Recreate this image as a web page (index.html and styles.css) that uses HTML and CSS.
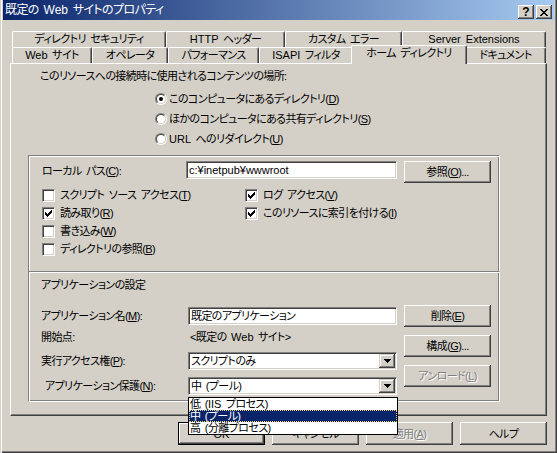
FILE: index.html
```html
<!DOCTYPE html>
<html lang="ja">
<head>
<meta charset="utf-8">
<title>既定の Web サイトのプロパティ</title>
<link rel="stylesheet" href="styles.css">
</head>
<body>
<div class="window">
  <div class="titlebar">
    <span class="title">既定の <span class="en">Web</span> サイトのプロパティ</span>
    <div class="tbtns">
      <span class="tbtn help">?</span>
      <span class="tbtn close"><svg width="8" height="7" viewBox="0 0 8 7" shape-rendering="crispEdges"><path d="M0 0h2v1H0zM6 0h2v1H6zM1 1h2v1H1zM5 1h2v1H5zM2 2h4v1H2zM3 3h2v1H3zM2 4h4v1H2zM1 5h2v1H1zM5 5h2v1H5zM0 6h2v1H0zM6 6h2v1H6z" fill="#000"/></svg></span>
    </div>
  </div>
  <div class="dlg">
    <div class="tabs">
      <div class="tabrow">
        <div class="tab t-dirsec">ディレクトリ セキュリティ</div>
        <div class="tab t-http"><span class="en">HTTP</span> ヘッダー</div>
        <div class="tab t-err">カスタム エラー</div>
        <div class="tab t-ext"><span class="en">Server Extensions</span></div>
      </div>
      <div class="tabrow">
        <div class="tab t-web"><span class="en">Web</span> サイト</div>
        <div class="tab t-op">オペレータ</div>
        <div class="tab t-perf">パフォーマンス</div>
        <div class="tab t-isapi"><span class="en">ISAPI</span> フィルタ</div>
        <div class="tab t-home selected">ホーム ディレクトリ</div>
        <div class="tab t-doc">ドキュメント</div>
      </div>
    </div>
    <div class="panel">
      <p class="intro">このリソースへの接続時に使用されるコンテンツの場所:</p>
      <div class="radios">
        <div class="radio"><span class="rb on"></span><span>このコンピュータにあるディレクトリ(<u>D</u>)</span></div>
        <div class="radio"><span class="rb"></span><span>ほかのコンピュータにある共有ディレクトリ(<u>S</u>)</span></div>
        <div class="radio"><span class="rb"></span><span><span class="en">URL</span> へのリダイレクト(<u>U</u>)</span></div>
      </div>
      <div class="group g1">
        <div class="pathrow">
          <span class="lbl">ローカル パス(<u>C</u>):</span>
          <div class="field path"><span class="en">c:¥inetpub¥wwwroot</span></div>
          <div class="btn">参照(<u>O</u>)...</div>
        </div>
        <div class="checks">
          <div class="ccol left">
            <div class="chk"><span class="cb"></span><span>スクリプト ソース アクセス(<u>T</u>)</span></div>
            <div class="chk"><span class="cb on"><svg width="7" height="7" viewBox="0 0 7 7" shape-rendering="crispEdges"><path d="M0 2h1v3H0zM1 3h1v3H1zM2 4h1v3H2zM3 3h1v3H3zM4 2h1v3H4zM5 1h1v3H5zM6 0h1v3H6z"/></svg></span><span>読み取り(<u>R</u>)</span></div>
            <div class="chk"><span class="cb"></span><span>書き込み(<u>W</u>)</span></div>
            <div class="chk"><span class="cb"></span><span>ディレクトリの参照(<u>B</u>)</span></div>
          </div>
          <div class="ccol right">
            <div class="chk"><span class="cb on"><svg width="7" height="7" viewBox="0 0 7 7" shape-rendering="crispEdges"><path d="M0 2h1v3H0zM1 3h1v3H1zM2 4h1v3H2zM3 3h1v3H3zM4 2h1v3H4zM5 1h1v3H5zM6 0h1v3H6z"/></svg></span><span>ログ アクセス(<u>V</u>)</span></div>
            <div class="chk"><span class="cb on"><svg width="7" height="7" viewBox="0 0 7 7" shape-rendering="crispEdges"><path d="M0 2h1v3H0zM1 3h1v3H1zM2 4h1v3H2zM3 3h1v3H3zM4 2h1v3H4zM5 1h1v3H5zM6 0h1v3H6z"/></svg></span><span>このリソースに索引を付ける(<u>I</u>)</span></div>
          </div>
        </div>
      </div>
      <div class="group g2">
        <div class="heading">アプリケーションの設定</div>
        <div class="appgrid">
          <div class="appfields">
            <div class="arow r-name"><span class="lbl">アプリケーション名(<u>M</u>):</span><div class="field app">既定のアプリケーション</div></div>
            <div class="arow r-start"><span class="lbl">開始点:</span><span class="val">&lt;既定の <span class="en">Web</span> サイト&gt;</span></div>
            <div class="arow r-exec"><span class="lbl">実行アクセス権(<u>P</u>):</span><div class="select"><span class="sval">スクリプトのみ</span><span class="sarrow"><svg width="7" height="4" viewBox="0 0 7 4" shape-rendering="crispEdges"><path d="M0 0h7v1H0zM1 1h5v1H1zM2 2h3v1H2zM3 3h1v1H3z"/></svg></span></div></div>
            <div class="arow r-prot"><span class="lbl ind">アプリケーション保護(<u>N</u>):</span>
              <div class="select open"><span class="sval">中 (プール)</span><span class="sarrow"><svg width="7" height="4" viewBox="0 0 7 4" shape-rendering="crispEdges"><path d="M0 0h7v1H0zM1 1h5v1H1zM2 2h3v1H2zM3 3h1v1H3z"/></svg></span>
                <ul class="dropdown">
                  <li>低 (<span class="en">IIS</span> プロセス)</li>
                  <li class="hl">中 (プール)</li>
                  <li>高 (分離プロセス)</li>
                </ul>
              </div>
            </div>
          </div>
          <div class="appbtns">
            <div class="btn">削除(<u>E</u>)</div>
            <div class="btn">構成(<u>G</u>)...</div>
            <div class="btn disabled">アンロード(<u>L</u>)</div>
          </div>
        </div>
      </div>
    </div>
    <div class="footer">
      <div class="btn fbtn default"><span class="en">OK</span></div>
      <div class="btn fbtn">キャンセル</div>
      <div class="btn fbtn disabled">適用(<u>A</u>)</div>
      <div class="btn fbtn">ヘルプ</div>
    </div>
  </div>
</div>
</body>
</html>
```

FILE: styles.css
```css
* { box-sizing: border-box; }
html, body { margin: 0; padding: 0; }
body {
  font-family: "Liberation Sans", "Noto Sans CJK JP", sans-serif;
  font-size: 11px;
  line-height: 14px;
  letter-spacing: -0.6px;
  word-spacing: 2px;
  font-feature-settings: "palt";
  color: #000;
  background: #d4d0c8;
}
.en { letter-spacing: 0; }
u { text-decoration: underline; text-underline-offset: 1px; }

.window {
  position: relative;
  width: 557px;
  height: 453px;
  padding: 0 3px 3px;
  background: #d4d0c8;
  box-shadow: inset 1px 0 0 #d4d0c8, inset 2px 0 0 #fff, inset -1px -1px 0 #404040, inset -2px -2px 0 #808080;
}

.titlebar {
  display: flex;
  align-items: center;
  justify-content: space-between;
  height: 20px;
  padding-left: 2px;
  background: linear-gradient(to right, #0a246a, #a6caf0);
  color: #fff;
  white-space: nowrap;
}
.title { font-size: 12px; }
.tbtns { display: flex; gap: 2px; margin-right: 2px; align-self: flex-end; margin-bottom: 1px; }
.tbtn {
  width: 16px;
  height: 14px;
  display: flex;
  align-items: center;
  justify-content: center;
  background: #d4d0c8;
  color: #000;
  font-weight: bold;
  font-size: 12px;
  letter-spacing: 0;
  box-shadow: inset -1px -1px 0 #404040, inset 1px 1px 0 #fff, inset -2px -2px 0 #808080;
}

.dlg { padding: 11px 7px 0; }

.tabs { margin-left: 2px; }
.tabrow { display: flex; height: 16px; }
.tab {
  height: 16px;
  flex: none;
  border-top: 1px solid #fff;
  border-left: 1px solid #fff;
  border-right: 1px solid #404040;
  border-radius: 2px 2px 0 0;
  box-shadow: inset -1px 0 0 #808080;
  background: #d4d0c8;
  text-align: center;
  white-space: nowrap;
  line-height: 15px;
}
.t-dirsec { width: 154px; }
.t-http { width: 119px; }
.t-err { width: 117px; }
.t-ext { width: 144px; }
.t-web { width: 80px; }
.t-op { width: 76px; }
.t-perf { width: 91px; }
.t-isapi { width: 94px; }
.t-home { width: 116px; }
.t-doc { width: 81px; }
.tab.selected {
  position: relative;
  z-index: 2;
  height: 19px;
  margin: -2px -2px -1px;
  line-height: 15px;
}

.panel {
  position: relative;
  height: 353px;
  border-top: 1px solid #fff;
  border-left: 1px solid #fff;
  border-right: 1px solid #404040;
  border-bottom: 1px solid #404040;
  box-shadow: inset -1px -1px 0 #808080;
}
.intro { margin: 5px 0 0 29px; white-space: nowrap; }
.radios { margin: 6px 0 0 144px; }
.radio { display: flex; align-items: center; gap: 2px; height: 20px; white-space: nowrap; }
.rb {
  position: relative;
  width: 12px;
  height: 12px;
  border-radius: 50%;
  border: 1px solid;
  border-color: #808080 #fff #fff #808080;
  background: #d4d0c8;
  flex: none;
}
.rb::before {
  content: "";
  position: absolute;
  inset: 0;
  border-radius: 50%;
  border: 1px solid;
  border-color: #404040 #d4d0c8 #d4d0c8 #404040;
  background: #fff;
}
.rb.on::after {
  content: "";
  position: absolute;
  left: 3px;
  top: 3px;
  width: 4px;
  height: 4px;
  border-radius: 50%;
  background: #000;
}

.group {
  margin-left: 17px;
  width: 472px;
  border: 1px solid;
  border-color: #808080 #fff #fff #808080;
  box-shadow: inset 1px 1px 0 #fff, inset -1px -1px 0 #808080;
}
.g1 { margin-top: 6px; height: 118px; }
.g2 { margin-top: -2px; height: 131px; }

.lbl { white-space: nowrap; }
.pathrow { display: flex; align-items: flex-start; margin: 5px 0 0 13px; height: 22px; }
.pathrow .lbl { width: 144px; line-height: 18px; padding-top: 1px; }
.field {
  height: 18px;
  background: #fff;
  border: 1px solid;
  border-color: #808080 #fff #fff #808080;
  box-shadow: inset 1px 1px 0 #404040, inset -1px -1px 0 #d4d0c8;
  padding: 1px 2px 0;
  white-space: nowrap;
}
.field.path { width: 211px; }
.pathrow .btn { margin-left: 7px; }

.btn {
  width: 87px;
  height: 22px;
  flex: none;
  display: flex;
  align-items: center;
  justify-content: center;
  background: #d4d0c8;
  white-space: nowrap;
  box-shadow: inset -1px -1px 0 #404040, inset 1px 1px 0 #fff, inset -2px -2px 0 #808080;
}
.btn.disabled { color: #808080; text-shadow: 1px 1px 0 #fff; }

.checks { display: flex; margin: 3px 0 0 13px; }
.ccol.left { width: 203px; }
.chk { display: flex; align-items: center; gap: 5px; height: 18px; white-space: nowrap; }
.cb {
  position: relative;
  width: 13px;
  height: 13px;
  flex: none;
  background: #fff;
  border: 1px solid;
  border-color: #808080 #fff #fff #808080;
  box-shadow: inset 1px 1px 0 #404040, inset -1px -1px 0 #d4d0c8;
  display: flex;
  align-items: center;
  justify-content: center;
}
.cb svg { display: block; }

.heading { margin: 6px 0 0 12px; }
.appgrid { display: flex; margin: 13px 0 0 12px; }
.appfields { width: 356px; padding-top: 2px; }
.arow { display: flex; align-items: center; height: 18px; }
.arow .lbl { width: 147px; }
.arow .lbl.ind { padding-left: 4px; }
.r-start { margin-top: 3px; }
.r-exec { margin-top: 6px; }
.r-prot { margin-top: 7px; }
.field.app { width: 209px; }
.val { padding-left: 2px; white-space: nowrap; }
.select {
  position: relative;
  width: 209px;
  height: 18px;
  display: flex;
  align-items: center;
  justify-content: space-between;
  background: #fff;
  border: 1px solid;
  border-color: #808080 #fff #fff #808080;
  box-shadow: inset 1px 1px 0 #404040, inset -1px -1px 0 #d4d0c8;
  padding: 1px 1px 1px 2px;
}
.sval { white-space: nowrap; }
.sarrow {
  width: 16px;
  height: 14px;
  background: #d4d0c8;
  display: flex;
  align-items: center;
  justify-content: center;
  box-shadow: inset -1px -1px 0 #404040, inset 1px 1px 0 #d4d0c8, inset -2px -2px 0 #808080, inset 2px 2px 0 #fff;
}
.dropdown {
  position: absolute;
  z-index: 5;
  left: -1px;
  top: 19px;
  width: 210px;
  margin: 0;
  padding: 0;
  list-style: none;
  background: #fff;
  border: 1px solid #000;
}
.dropdown li { height: 12px; line-height: 12px; padding-left: 1px; white-space: nowrap; }
.dropdown li.hl { background: #0a246a; color: #fff; outline: 1px dotted #e8d080; outline-offset: -1px; }

.appbtns { display: flex; flex-direction: column; gap: 8px; margin-left: 7px; }

.footer { display: flex; justify-content: flex-end; gap: 7px; margin-top: 6px; }
.fbtn { height: 23px; }
.fbtn.default { border: 1px solid #000; }
```
